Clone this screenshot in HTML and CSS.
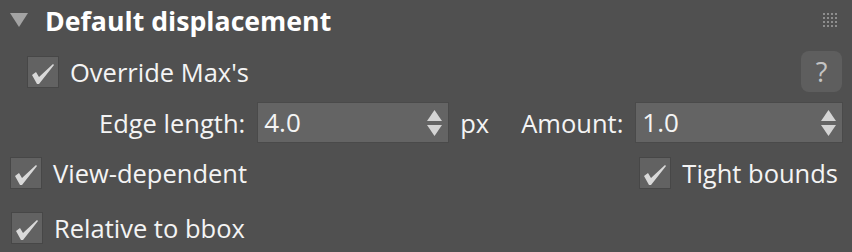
FILE: index.html
```html
<!DOCTYPE html>
<html>
<head>
<meta charset="utf-8">
<link rel="stylesheet" href="styles.css">
</head>
<body>
<div class="panel">
  <div class="header">
    <svg class="caret" width="18" height="14" viewBox="0 0 18 14"><polygon points="0,0 18,0 9,14" fill="#a3a3a3"/></svg>
    <span class="title">Default displacement</span>
    <svg class="grip" width="14" height="14" viewBox="0 0 14 14">
      <g fill="#8e8e8e">
        <rect x="0" y="0" width="2" height="2"/><rect x="4" y="0" width="2" height="2"/><rect x="8" y="0" width="2" height="2"/><rect x="12" y="0" width="2" height="2"/>
        <rect x="0" y="4" width="2" height="2"/><rect x="4" y="4" width="2" height="2"/><rect x="8" y="4" width="2" height="2"/><rect x="12" y="4" width="2" height="2"/>
        <rect x="0" y="8" width="2" height="2"/><rect x="4" y="8" width="2" height="2"/><rect x="8" y="8" width="2" height="2"/><rect x="12" y="8" width="2" height="2"/>
        <rect x="0" y="12" width="2" height="2"/><rect x="4" y="12" width="2" height="2"/><rect x="8" y="12" width="2" height="2"/><rect x="12" y="12" width="2" height="2"/>
      </g>
    </svg>
  </div>

  <div class="row row-override">
    <label class="check">
      <span class="box"><svg width="30" height="30" viewBox="0 0 30 30"><path d="M4,18 L8,15 L11,20 L25,7 L26,8 L11,27 L9,27 Z" fill="#d9d9d9"/></svg></span>
      <span class="label">Override Max's</span>
    </label>
    <button class="help">?</button>
  </div>

  <div class="row row-fields">
    <span class="label">Edge length:</span>
    <div class="spinner spinner-edge">
      <span class="value">4.0</span>
      <span class="arrows"><svg width="15" height="26" viewBox="0 0 15 26"><polygon points="7.5,0 15,11 0,11" fill="#d4d4d4"/><polygon points="0,15 15,15 7.5,26" fill="#d4d4d4"/></svg></span>
    </div>
    <span class="label unit">px</span>
    <span class="label amount">Amount:</span>
    <div class="spinner spinner-amount">
      <span class="value">1.0</span>
      <span class="arrows"><svg width="15" height="26" viewBox="0 0 15 26"><polygon points="7.5,0 15,11 0,11" fill="#d4d4d4"/><polygon points="0,15 15,15 7.5,26" fill="#d4d4d4"/></svg></span>
    </div>
  </div>

  <div class="row row-view">
    <label class="check">
      <span class="box"><svg width="30" height="30" viewBox="0 0 30 30"><path d="M4,18 L8,15 L11,20 L25,7 L26,8 L11,27 L9,27 Z" fill="#d9d9d9"/></svg></span>
      <span class="label">View-dependent</span>
    </label>
    <label class="check">
      <span class="box"><svg width="30" height="30" viewBox="0 0 30 30"><path d="M4,18 L8,15 L11,20 L25,7 L26,8 L11,27 L9,27 Z" fill="#d9d9d9"/></svg></span>
      <span class="label">Tight bounds</span>
    </label>
  </div>

  <div class="row row-relative">
    <label class="check">
      <span class="box"><svg width="30" height="30" viewBox="0 0 30 30"><path d="M4,18 L8,15 L11,20 L25,7 L26,8 L11,27 L9,27 Z" fill="#d9d9d9"/></svg></span>
      <span class="label">Relative to bbox</span>
    </label>
  </div>
</div>
</body>
</html>
```

FILE: styles.css
```css
html, body {
  margin: 0;
  padding: 0;
  background: #505050;
}
body {
  width: 852px;
  height: 252px;
  overflow: hidden;
  font-family: "Open Sans", "Noto Sans", sans-serif;
  color: #f4f4f4;
}
.panel {
  display: flex;
  flex-direction: column;
}
.header {
  height: 40px;
  display: flex;
  align-items: center;
  padding: 0 15px 0 10px;
}
.caret {
  display: block;
}
.title {
  margin-left: 17px;
  font-weight: bold;
  font-size: 26.7px;
  line-height: 40px;
  color: #ffffff;
  position: relative;
  top: 1px;
}
.grip {
  display: block;
  margin-left: auto;
}
.row {
  display: flex;
  align-items: center;
}
.label {
  font-size: 25.5px;
  line-height: 32px;
  white-space: nowrap;
}
.check {
  display: flex;
  align-items: center;
}
.box {
  width: 30px;
  height: 30px;
  border: 1px solid #474747;
  background: #626262;
  display: block;
}
.box svg {
  display: block;
}
.check .label {
  margin-left: 11px;
}
.row-override {
  margin-top: 11px;
  height: 41px;
  padding: 0 10px 0 27px;
  justify-content: space-between;
}
.help {
  width: 41px;
  height: 41px;
  border: none;
  border-radius: 8px;
  background: #5e5e5e;
  color: #c4c4c4;
  font-family: "Open Sans", "Noto Sans", sans-serif;
  font-size: 27px;
  padding: 0;
  line-height: 41px;
}
.row-fields {
  margin-top: 10px;
  height: 41px;
  padding: 0 9px 0 99px;
}
.spinner {
  height: 39px;
  border: 1px solid #4a4a4a;
  background: #646464;
  display: flex;
  align-items: center;
  padding: 0 6px 0 6px;
  box-sizing: content-box;
}
.spinner .value {
  font-size: 26px;
  line-height: 39px;
  flex: 1;
}
.spinner .arrows svg {
  display: block;
}
.spinner-edge {
  width: 178px;
  margin-left: 12px;
}
.unit {
  margin-left: 11px;
}
.amount {
  margin-left: 32px;
}
.spinner-amount {
  flex: 1;
  margin-left: 12px;
}
.row-view {
  margin-top: 14px;
  height: 32px;
  padding: 0 14px 0 10px;
  justify-content: space-between;
}
.row-relative {
  margin-top: 23px;
  height: 32px;
  padding: 0 0 0 11px;
}
```
